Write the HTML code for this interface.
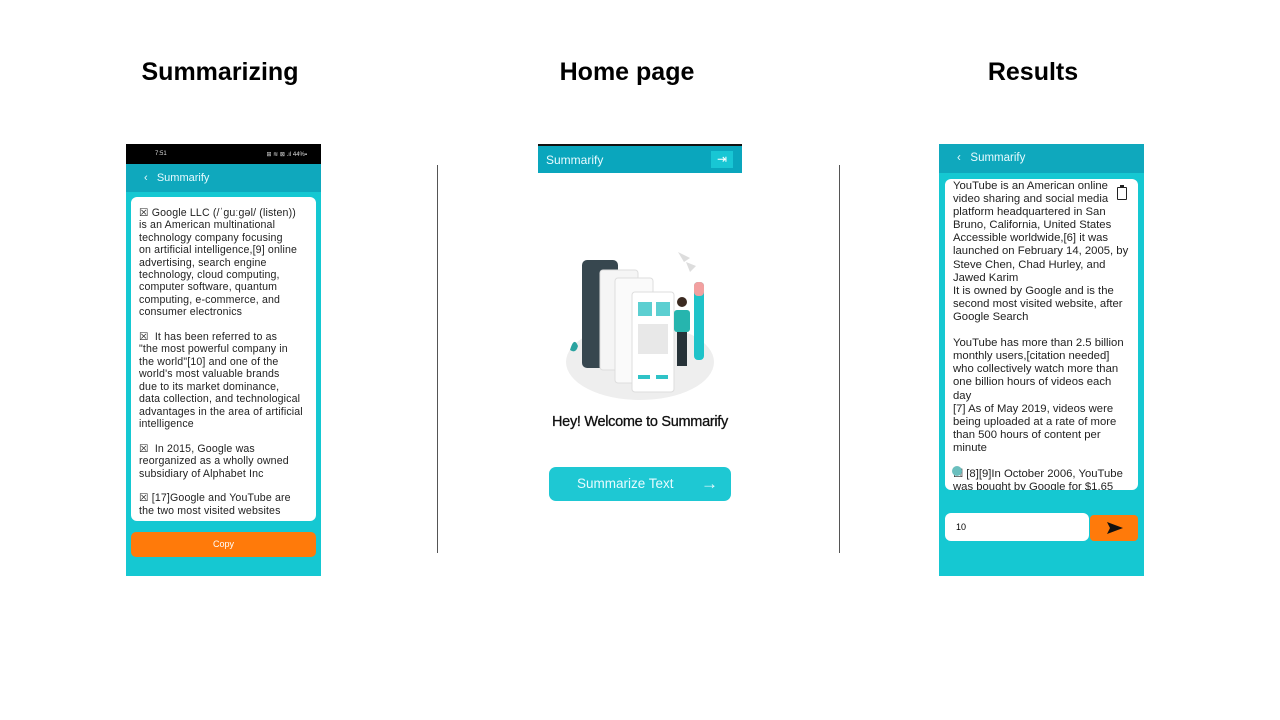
<!DOCTYPE html>
<html><head><meta charset="utf-8"><style>
*{margin:0;padding:0;box-sizing:border-box}
body{width:1280px;height:720px;background:#fff;position:relative;overflow:hidden;font-family:"Liberation Sans",sans-serif}
.abs{position:absolute}
h1{position:absolute;font-size:25px;font-weight:bold;color:#000;transform:translateX(-50%);white-space:nowrap;top:58px}
.line{position:absolute;width:1px;background:#555;top:165px;height:388px}
.txt{font-size:10.6px;line-height:12.4px;color:#222;white-space:nowrap;letter-spacing:0.15px}
.txt2{font-size:11.3px;line-height:13.1px;color:#222;white-space:nowrap}
</style></head><body>
<h1 style="left:220px">Summarizing</h1>
<h1 style="left:627px">Home page</h1>
<h1 style="left:1033px">Results</h1>
<div class="line" style="left:437px"></div>
<div class="line" style="left:839px"></div>

<!-- left phone -->
<div class="abs" style="left:126px;top:144px;width:195px;height:432px;background:#15c8d2">
 <div class="abs" style="left:0;top:0;width:195px;height:20px;background:#000;color:#ddd;font-size:6px;padding:7px 0 0 29px">7:51<span style="position:absolute;right:14px">⊞ ≋ ⊠ .ıl 44%▪</span></div>
 <div class="abs" style="left:0;top:20px;width:195px;height:28px;background:#0fa8bd;color:#e8fbff;font-size:11px;padding:8px 0 0 18px">‹&nbsp;&nbsp;&nbsp;Summarify</div>
 <div class="abs txt" style="left:5px;top:53px;width:185px;height:324px;background:#fff;border-radius:6px;padding:10px 0 0 8px">
 ☒ Google LLC (/ˈɡuːɡəl/ (listen))<br>is an American multinational<br>technology company focusing<br>on artificial intelligence,[9] online<br>advertising, search engine<br>technology, cloud computing,<br>computer software, quantum<br>computing, e-commerce, and<br>consumer electronics<br><br>☒&nbsp; It has been referred to as<br>"the most powerful company in<br>the world"[10] and one of the<br>world's most valuable brands<br>due to its market dominance,<br>data collection, and technological<br>advantages in the area of artificial<br>intelligence<br><br>☒&nbsp; In 2015, Google was<br>reorganized as a wholly owned<br>subsidiary of Alphabet Inc<br><br>☒ [17]Google and YouTube are<br>the two most visited websites</div>
 <div class="abs" style="left:5px;top:388px;width:185px;height:25px;background:#ff7a0a;border-radius:5px;color:#fff;font-size:9px;text-align:center;line-height:25px">Copy</div>
</div>

<!-- middle phone -->
<div class="abs" style="left:538px;top:144px;width:204px;height:2px;background:#111"></div>
<div class="abs" style="left:538px;top:146px;width:204px;height:27px;background:#0aa6bd;color:#e8fbff;font-size:12px;padding:7px 0 0 8px">Summarify
 <div class="abs" style="left:173px;top:5px;width:22px;height:17px;background:#18c6d4;color:#fff;font-size:12px;text-align:center;line-height:16px">⇥</div></div>
<svg class="abs" style="left:560px;top:240px" width="160" height="165" viewBox="0 0 160 165">
 <ellipse cx="80" cy="122" rx="74" ry="38" fill="#eee"/>
 <rect x="22" y="20" width="36" height="108" rx="5" fill="#37474f" transform="skew(0,-15) translate(0,12)"/>
 <rect x="40" y="30" width="38" height="100" rx="3" fill="#f5f5f5" stroke="#ddd"/>
 <rect x="55" y="38" width="38" height="105" rx="3" fill="#fafafa" stroke="#ddd"/>
 <rect x="72" y="52" width="42" height="100" rx="3" fill="#fff" stroke="#ddd"/>
 <rect x="78" y="62" width="14" height="14" fill="#5ccfd1"/><rect x="96" y="62" width="14" height="14" fill="#5ccfd1"/>
 <rect x="78" y="84" width="30" height="30" fill="#e8e8e8"/>
 <rect x="78" y="135" width="12" height="4" fill="#2fc3c7"/><rect x="96" y="135" width="12" height="4" fill="#2fc3c7"/>
 <rect x="134" y="42" width="10" height="78" rx="4" fill="#1fc3c9"/><rect x="134" y="42" width="10" height="14" rx="4" fill="#f2a0a0"/>
 <circle cx="122" cy="62" r="5" fill="#3b2a20"/>
 <rect x="114" y="70" width="16" height="22" rx="3" fill="#26b5ae"/>
 <rect x="117" y="92" width="10" height="34" fill="#263238"/>
 <path d="M10 110 q4 -14 8 -4 q-2 8 -8 4z" fill="#2aa3a0"/>
 <path d="M118 12 l12 6 l-6 4z M126 22 l10 4 l-6 6z" fill="#ddd"/>
</svg>
<div class="abs" style="left:538px;top:414px;width:204px;text-align:center;font-size:14.5px;color:#111;letter-spacing:-0.3px;-webkit-text-stroke:0.3px #111">Hey! Welcome to Summarify</div>
<div class="abs" style="left:549px;top:467px;width:182px;height:34px;background:#1ec8d3;border-radius:7px;color:#e8fbff;font-size:13.5px;line-height:33px;padding-left:28px">Summarize Text<span style="position:absolute;right:13px;font-size:17px">→</span></div>

<!-- right phone -->
<div class="abs" style="left:939px;top:144px;width:205px;height:432px;background:#15c8d2">
 <div class="abs" style="left:0;top:0;width:205px;height:29px;background:#0fa8bd;color:#e8fbff;font-size:11.5px;padding:8px 0 0 18px">‹&nbsp;&nbsp;&nbsp;Summarify</div>
 <div class="abs txt2" style="left:6px;top:35px;width:193px;height:311px;background:#fff;border-radius:6px;padding:1px 0 0 8px;overflow:hidden">
 YouTube is an American online<br>video sharing and social media<br>platform headquartered in San<br>Bruno, California, United States<br>Accessible worldwide,[6] it was<br>launched on February 14, 2005, by<br>Steve Chen, Chad Hurley, and<br>Jawed Karim<br>It is owned by Google and is the<br>second most visited website, after<br>Google Search<br><br>YouTube has more than 2.5 billion<br>monthly users,[citation needed]<br>who collectively watch more than<br>one billion hours of videos each<br>day<br>[7] As of May 2019, videos were<br>being uploaded at a rate of more<br>than 500 hours of content per<br>minute<br><br>☒ [8][9]In October 2006, YouTube<br>was bought by Google for $1.65
 <div class="abs" style="left:172px;top:8px;width:10px;height:13px;border:1.5px solid #222;border-radius:1px"></div>
 <div class="abs" style="left:175px;top:6px;width:4px;height:3px;background:#222"></div>
 <div class="abs" style="left:7px;top:287px;width:10px;height:10px;border-radius:50%;background:#6bbfbe"></div>
 </div>
 <div class="abs" style="left:6px;top:369px;width:144px;height:28px;background:#fff;border-radius:6px;font-size:9px;padding:9px 0 0 11px">10</div>
 <div class="abs" style="left:151px;top:371px;width:48px;height:26px;background:#ff7a0a;border-radius:4px">
  <svg width="48" height="26"><path d="M17 7 L33 13 L17 19 L20 13 Z" fill="#111"/></svg></div>
</div>
</body></html>
